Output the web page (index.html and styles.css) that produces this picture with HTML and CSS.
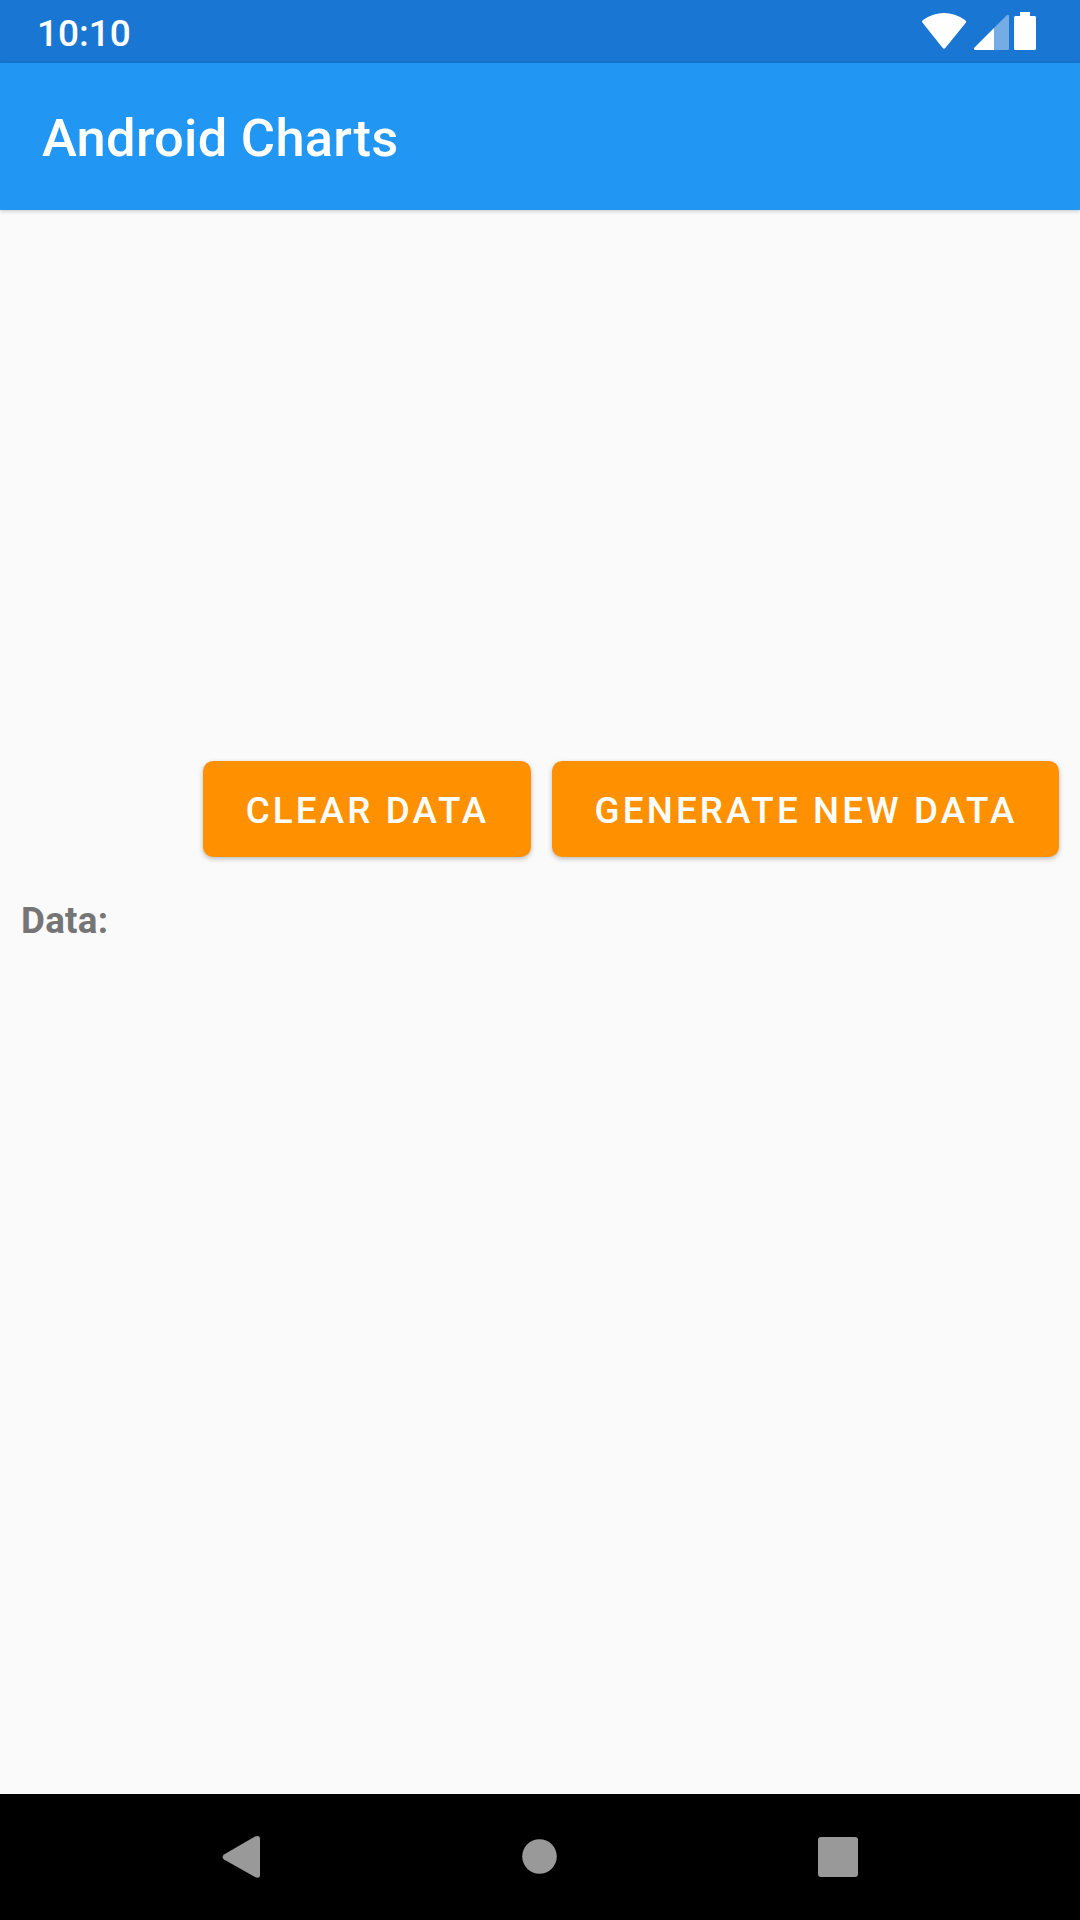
FILE: index.html
```html
<!DOCTYPE html>
<html lang="en">
<head>
<meta charset="utf-8">
<title>Android Charts</title>
<link rel="stylesheet" href="styles.css">
</head>
<body>
<header class="status-bar">
  <span class="clock">10:10</span>
  <svg class="status-icons" width="116" height="40" viewBox="0 0 116 40" aria-hidden="true">
    <path fill="#fff" d="M1.4 10.5Q.4 9 2 8Q12 1 23 1T44 8Q46 9 45 10.5L24.3 36Q23 37.500 21.700 36Z"/>
    <path fill="#fff" fill-opacity=".4" d="M73 16L86 3Q88 2 88 4V36.500Q88 38 86.500 38H73Z"/>
    <path fill="#fff" d="M73 16V38H54Q52.500 38 53 36Z"/>
    <path fill="#fff" d="M99 0h10v4h4.500a1.500 1.500 0 0 1 1.500 1.500v31a1.500 1.500 0 0 1-1.500 1.500h-19a1.500 1.500 0 0 1-1.500-1.500v-31a1.500 1.500 0 0 1 1.500-1.500h4.500z"/>
  </svg>
</header>
<div class="app-bar"><h1 class="title">Android Charts</h1></div>
<main class="content">
  <div class="chart"></div>
  <div class="actions">
    <button class="button button-clear">CLEAR DATA</button>
    <button class="button button-generate">GENERATE NEW DATA</button>
  </div>
  <p class="data-label">Data:</p>
</main>
<nav class="nav-bar">
  <svg width="1080" height="126" viewBox="0 0 1080 126" fill="#999" aria-hidden="true">
    <path d="M224 60.500L255 42.500Q260 40.500 260 45v36q0 4-5 2L224 65.500q-3-2.500 0-5Z"/>
    <circle cx="539.5" cy="62.5" r="17.3"/>
    <rect x="818" y="43" width="40" height="40" rx="3"/>
  </svg>
</nav>
</body>
</html>
```
FILE: styles.css
```css
* { box-sizing: border-box; }
body { margin: 0; height: 1920px; display: flex; flex-direction: column; overflow: hidden; background: #fafafa; font-family: Roboto, sans-serif; }
.status-bar { height: 63px; flex: none; display: flex; justify-content: space-between; padding: 12px 43px 0 37px; background: #1976d2; color: #fff; }
.clock { font-size: 37px; font-weight: 500; line-height: 43px; }
.status-icons { display: block; }
.app-bar { height: 147px; flex: none; display: flex; align-items: center; padding: 3px 42px 0; background: #2196f3; color: #fff; box-shadow: 0 1px 4px rgba(0,0,0,.22); }
.title { margin: 0; font-size: 52.5px; font-weight: 500; line-height: 62px; letter-spacing: .25px; }
.content { flex: 1; }
.chart { height: 551px; }
.actions { display: flex; justify-content: flex-end; gap: 21px; padding-right: 21px; }
.button { height: 96px; padding: 2px 0 0 1px; border: 0; border-radius: 10px; background: #ff9100; color: #fff; font: 500 36.75px Roboto, sans-serif; letter-spacing: 3.15px; box-shadow: 0 2px 5px rgba(0,0,0,.25); }
.button-clear { width: 328px; }
.button-generate { width: 507px; }
.data-label { margin: 42px 0 0 21px; font-size: 36.75px; line-height: 43px; font-weight: 700; letter-spacing: .25px; color: #757575; }
.nav-bar { height: 126px; flex: none; background: #000; }
.nav-bar svg { display: block; }
```
